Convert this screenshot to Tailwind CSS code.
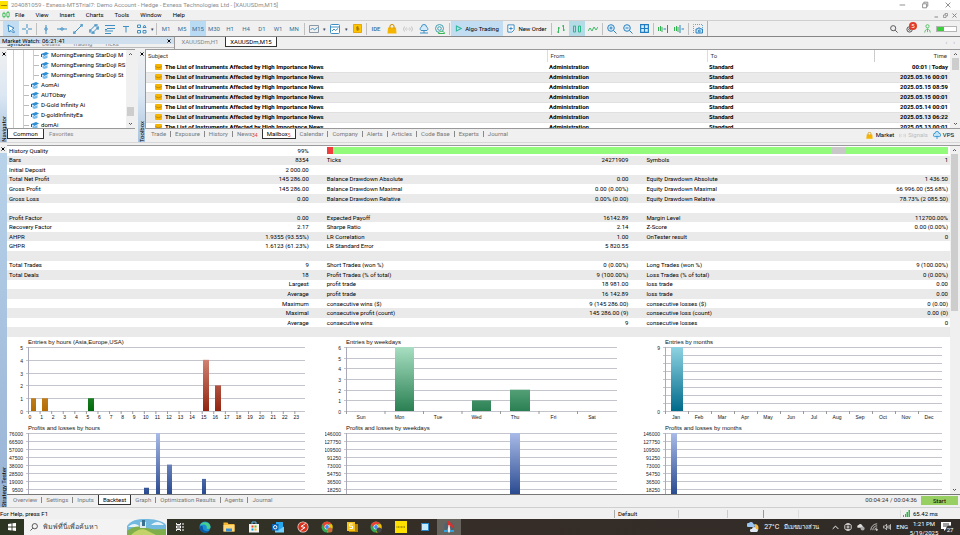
<!DOCTYPE html>
<html lang="en">
<head>
    <meta charset="UTF-8">
    <meta name="viewport" content="width=device-width, initial-scale=1.0">
    <title>204081059 - Exness-MT5Trial7: Demo Account</title>
    <script src="https://cdn.jsdelivr.net/npm/@tailwindcss/browser@4"></script>
</head>
<body class="h-screen flex flex-col overflow-hidden bg-[#f0f0f0] font-['Roboto','Noto_Sans',sans-serif] text-[6px] leading-[8px] text-black">

    <!-- title bar -->
    <header class="flex h-[10px] shrink-0 items-center bg-white text-[#8c8c8c]">
        <span class="h-[8px] w-[8px] bg-[#ffe100] text-center text-[2px] text-black">exness</span>
        <h1 class="ml-[3px]">204081059 - Exness-MT5Trial7: Demo Account - Hedge - Exness Technologies Ltd - [XAUUSDm,M15]</h1>
        <div class="ml-auto flex gap-[15px] pr-[8px]">
            <button aria-label="Minimize"><svg class="size-[8px]" viewBox="0 0 10 10" fill="none" stroke="#777"><path d="M2 5h7"/></svg></button>
            <button aria-label="Restore"><svg class="size-[8px]" viewBox="0 0 10 10" fill="none" stroke="#777"><path d="M2 3.500h5v5H2zM3.500 3V1.500h5v5H7.500"/></svg></button>
            <button aria-label="Close"><svg class="size-[8px]" viewBox="0 0 10 10" fill="none" stroke="#777"><path d="M2 2l6 6M8 2l-6 6"/></svg></button>
        </div>
    </header>

    <!-- menu -->
    <nav class="flex h-[10px] shrink-0 items-center gap-[11px] pl-[2px] text-[6px] text-black">
        <svg class="-mr-[6px] size-[8px]" viewBox="0 0 10 10" fill="none" stroke="#2eb84a"><path d="M1 3h3v4H1zM6 2h3v5H6zM2.500 1v2M2.500 7v2M7.500 0v2M7.500 7v2"/></svg>
        <button>File</button>
        <button>View</button>
        <button>Insert</button>
        <button>Charts</button>
        <button>Tools</button>
        <button>Window</button>
        <button>Help</button>
        <div class="ml-auto flex gap-[4px] pr-[3px]">
            <button aria-label="Minimize chart"><svg class="size-[5px]" viewBox="0 0 10 10" fill="none" stroke="#888" stroke-width="2"><path d="M1 8h7"/></svg></button>
            <button aria-label="Restore chart"><svg class="size-[5px]" viewBox="0 0 10 10" fill="none" stroke="#888" stroke-width="1.500"><path d="M1 4h5v5H1zM4 4V1h5v5H6"/></svg></button>
            <button aria-label="Close chart"><svg class="size-[5px]" viewBox="0 0 10 10" fill="none" stroke="#888" stroke-width="2"><path d="M1 1l8 8M9 1L1 9"/></svg></button>
        </div>
    </nav>

    <!-- toolbar -->
    <div class="flex h-[17px] shrink-0 items-center border-t border-b border-t-[#cfcfcf] border-b-[#868686] pl-[3px] text-[#3b6f96]">
        <button aria-label="Cursor" class="flex h-[15px] w-4 items-center justify-center bg-[#c2dcf2]"><svg class="size-[10px]" viewBox="0 0 10 10" fill="#fff" stroke="#2c82c0"><path d="M2 1l6 3-2 1.500L8.500 8 7.500 9 5 6.500 3 8z"/></svg></button>
        <button aria-label="Crosshair" class="flex w-4 justify-center"><svg class="size-[10px]" viewBox="0 0 10 10" fill="none" stroke="#3f8fc4"><path d="M5 0v4M5 6v4M0 5h4M6 5h4"/></svg></button>
        <i class="mx-px h-3 w-px bg-[#c0c0c0]"></i>
        <button aria-label="Vertical line" class="flex w-4 justify-center"><svg class="size-[10px]" viewBox="0 0 10 10" fill="none" stroke="#3f8fc4"><path d="M5 1v3M5 6v4M4 4h2v2H4z"/></svg></button>
        <button aria-label="Horizontal line" class="flex w-4 justify-center"><svg class="size-[10px]" viewBox="0 0 10 10" fill="none" stroke="#3f8fc4"><path d="M0 5h4M6 5h4M4 4h2v2H4z"/></svg></button>
        <button aria-label="Trendline" class="flex w-4 justify-center"><svg class="size-[10px]" viewBox="0 0 10 10" fill="none" stroke="#3f8fc4"><path d="M1.500 8.500L8.500 1.500M0 8h2v2H0zM8 0h2v2H8z"/></svg></button>
        <button aria-label="Channel" class="flex w-4 justify-center"><svg class="size-[10px]" viewBox="0 0 10 10" fill="none" stroke="#3f8fc4"><path d="M1 6.500l5.500-5.500M3.500 9l5.500-5.500M0 6h2v2H0zM6 0h2v2H6zM3 8h2v2H3zM8 3h2v2H8z"/></svg></button>
        <button aria-label="Fibonacci" class="flex w-4 justify-center"><svg class="size-[10px]" viewBox="0 0 10 10" fill="none" stroke="#3f8fc4"><path d="M0 1.500h10M2 4.500h8M0 7h8M0 9.500h6M0 5.500h2"/></svg></button>
        <button aria-label="Text" class="flex w-4 justify-center"><svg class="size-[10px]" viewBox="0 0 10 10" fill="none" stroke="#3f8fc4"><path d="M2 2.500h6M5 2.500v6"/></svg></button>
        <button aria-label="Shapes" class="flex w-4 justify-center"><svg class="size-[10px]" viewBox="0 0 10 10" fill="none" stroke="#3f8fc4"><path d="M.5 1h3v2.500h-3zM.5 6.500h3V9h-3zM6 6.500h3V9H6zM6 3.500L7.500 1 9 3.500z"/></svg></button>
        <button aria-label="More shapes" class="w-[5px] text-[5px] text-[#444]">▾</button>
        <i class="mr-px ml-px h-3 w-px bg-[#c0c0c0]"></i>
        <button class="h-[15px] w-4">M1</button>
        <button class="h-[15px] w-4">M5</button>
        <button class="h-[15px] w-4 bg-[#b9daf3]">M15</button>
        <button class="h-[15px] w-4">M30</button>
        <button class="h-[15px] w-4">H1</button>
        <button class="h-[15px] w-4">H4</button>
        <button class="h-[15px] w-4">D1</button>
        <button class="h-[15px] w-4">W1</button>
        <button class="h-[15px] w-4">MN</button>
        <i class="mx-[2px] h-3 w-px bg-[#c0c0c0]"></i>
        <button aria-label="Line type" class="flex w-[14px] justify-center"><svg class="size-[10px]" viewBox="0 0 10 10" fill="none" stroke="#8b9aa6"><path d="M.5 1.500h9v7h-9z"/><path stroke="#3f8fc4" d="M1.500 6l2-2 2 2 3-2.500"/></svg></button>
        <button aria-label="Line types" class="w-[6px] text-[5px] text-[#444]">▾</button>
        <button aria-label="Templates" class="flex w-4 justify-center"><svg class="size-[10px]" viewBox="0 0 10 10" fill="#fff" stroke="#3f8fc4"><rect x=".5" y=".5" width="9" height="9" rx="1"/><path fill="none" d="M1 3h8M2 7l2-2 1.500 1.500L8 4.500"/></svg></button>
        <button aria-label="More templates" class="w-[6px] text-[5px] text-[#444]">▾</button>
        <button aria-label="Symbols" class="flex w-4 justify-center"><svg class="size-[9px]" viewBox="0 0 10 10" fill="none" stroke="#a87800"><path fill="#fdc400" stroke="#e0a000" d="M.5.5h9v9h-9z"/><path d="M6.500 3.500H4v1.500h2.500v1.500H3.500M5 2.500v5"/></svg></button>
        <i class="mx-px h-3 w-px bg-[#c0c0c0]"></i>
        <button class="w-4 font-medium">IDE</button>
        <button aria-label="Market" class="flex w-4 justify-center"><svg class="size-[10px]" viewBox="0 0 10 10"><path fill="#f5b400" d="M1 3.500h8l.5 6h-9z"/><path fill="none" stroke="#c88d00" d="M3 4.500V2a2 1.500 0 0 1 4 0v2.500"/></svg></button>
        <button aria-label="Signals" class="flex w-4 justify-center"><svg class="size-[10px]" viewBox="0 0 10 10" fill="none" stroke="#c4c4c4"><path d="M1.500 2.500a4 4 0 0 0 0 5M3.500 3.500a2 2 0 0 0 0 3M6.500 3.500a2 2 0 0 1 0 3M8.500 2.500a4 4 0 0 1 0 5M4.500 5h1"/></svg></button>
        <button aria-label="VPS" class="flex w-4 justify-center"><svg class="size-[10px]" viewBox="0 0 10 10" fill="#d6ebfa" stroke="#3f8fc4"><path d="M2 6.500a2 2 0 0 1 .5-3.500 2.500 2.500 0 0 1 5 0 2 2 0 0 1 .5 3.500zM1 9h8M5 7v2"/></svg></button>
        <button aria-label="Community" class="flex w-4 justify-center"><svg class="size-[10px]" viewBox="0 0 10 10" fill="none" stroke="#3f9fb0"><circle cx="4.500" cy="4.500" r="4"/><circle cx="4.500" cy="4.500" r="1.800"/><path fill="#e8f7ea" stroke="#35b455" d="M3.500 9.500c0-3 6-3 6 0z"/></svg></button>
        <i class="mx-px h-3 w-px bg-[#c0c0c0]"></i>
        <button class="flex h-[15px] w-[52px] items-center justify-center gap-[3px] bg-[#c2dcf2] text-black"><svg class="size-[7px]" viewBox="0 0 10 10" fill="none" stroke="#2eb89a" stroke-width="1.500"><path d="M2 1.500L9 5 2 8.500z"/></svg>Algo Trading</button>
        <button class="flex h-[15px] w-[47px] items-center justify-center gap-[3px] whitespace-nowrap text-black"><svg class="size-[9px]" viewBox="0 0 10 10" fill="#fff" stroke="#2c82c0"><path d="M2 1h7v5.500L6.500 9H2zM5.500 3v4M3.500 5h4"/></svg>New Order</button>
        <i class="mx-px h-3 w-px bg-[#c0c0c0]"></i>
        <button aria-label="Bars" class="flex w-4 justify-center"><svg class="size-[10px]" viewBox="0 0 10 10" fill="none" stroke="#3cb963"><path d="M2.500 3v6M1 8h1.500M2.500 4H4M7.500 1v6M6 2h1.500M7.500 6H9"/></svg></button>
        <button aria-label="Candles" class="flex h-[15px] w-4 items-center justify-center bg-[#b5dbe6]"><svg class="size-[10px]" viewBox="0 0 10 10" fill="none" stroke="#2fb58c"><path d="M1.500 2h2v6h-2zM6.500 2h2v6h-2z"/></svg></button>
        <button aria-label="Line" class="flex w-4 justify-center"><svg class="size-[10px]" viewBox="0 0 10 10" fill="none" stroke="#3cb963"><path d="M0 7l2-3 2 3 2-4 2 3 2-3"/></svg></button>
        <i class="mx-px h-3 w-px bg-[#c0c0c0]"></i>
        <button aria-label="Zoom in" class="flex w-4 justify-center"><svg class="size-[10px]" viewBox="0 0 10 10" fill="#d9ecfa" stroke="#2c82c0"><circle cx="4" cy="4" r="3.300"/><path d="M6.500 6.500l3 3M2.500 4h3M4 2.500v3"/></svg></button>
        <button aria-label="Zoom out" class="flex w-4 justify-center"><svg class="size-[10px]" viewBox="0 0 10 10" fill="#d9ecfa" stroke="#2c82c0"><circle cx="4" cy="4" r="3.300"/><path d="M6.500 6.500l3 3M2.500 4h3"/></svg></button>
        <button aria-label="Tile windows" class="flex w-4 justify-center"><svg class="size-[9px]" viewBox="0 0 10 10" fill="#d9ecfa" stroke="#1f7cc0" stroke-width="1.300"><path d="M.7.7h8.600v8.600H.7zM5 1v8M1 5h8"/></svg></button>
        <i class="mx-px h-3 w-px bg-[#c0c0c0]"></i>
        <button aria-label="Auto scroll" class="flex w-4 justify-center"><svg class="size-[10px]" viewBox="0 0 10 10" fill="none" stroke="#35b455"><path d="M.5 3v4M2.500 2v5M4 3v5"/><path stroke="#2c82c0" d="M5.500 5H8M9.500 1v8"/></svg></button>
        <button aria-label="Chart shift" class="flex w-4 justify-center"><svg class="size-[10px]" viewBox="0 0 10 10" fill="none" stroke="#35b455"><path d="M.5 3v4M2.500 2v5M4 3v5"/><path stroke="#2c82c0" d="M7.500 5H10M6 1v8"/></svg></button>
        <i class="mx-px h-3 w-px bg-[#c0c0c0]"></i>
        <button aria-label="Screenshot" class="flex w-4 justify-center"><svg class="size-[10px]" viewBox="0 0 10 10" fill="none" stroke="#6aa5cc"><path stroke-dasharray="1 1" d="M.5 9V.5h9V4"/><path fill="#cfe6f7" stroke="#2c82c0" d="M3 5h1.500l.5-1h2l.5 1H9.500v4H3z"/><circle cx="6.300" cy="7" r="1" stroke="#2c82c0"/></svg></button>
        <i class="ml-px h-[15px] w-px bg-[#b0b0b0]"></i>
        <div class="ml-auto flex items-center gap-[8px] pr-[3px]">
            <button aria-label="Search"><svg class="size-[8px]" viewBox="0 0 10 10" fill="none" stroke="#555" stroke-width="1.200"><circle cx="4" cy="4" r="3.200"/><path d="M6.500 6.500l3 3"/></svg></button>
            <button aria-label="Notifications" class="relative"><svg class="size-[9px]" viewBox="0 0 10 10" fill="none" stroke="#444"><circle cx="4" cy="6" r="3"/><circle cx="4" cy="6" r="1"/></svg><span class="absolute -top-[2px] left-[3px] size-[8px] rounded-full bg-[#e03a2c] text-center text-[6px] text-white">5</span></button>
            <div class="flex items-center gap-[4px]">
                <button aria-label="Account"><svg class="size-[9px]" viewBox="0 0 10 10" fill="none" stroke="#4fbf5f"><circle cx="5" cy="2.500" r="1.800"/><path d="M2 9.500c0-5 6-5 6 0M5 5v4"/></svg></button>
                <div class="h-[6px] w-[21px] border border-[#b5b5b5] bg-white"><div class="h-full w-[7px] bg-[#3ccf3c]"></div></div>
            </div>
        </div>
    </div>

    <!-- market watch caption and chart tabs -->
    <div class="flex h-[12px] shrink-0">
        <div class="w-[174px] overflow-hidden">
            <div class="flex h-[7px] items-center bg-[#cfdfee] pl-[2px] text-black">Market Watch: 06:21:41<button aria-label="Close Market Watch" class="ml-auto pr-[3px]"><svg class="size-[4px]" viewBox="0 0 4 4" stroke="#000"><path d="M.5.5l3 3M3.500.5l-3 3"/></svg></button></div>
            <div class="flex h-[4px] items-end gap-[12px] overflow-hidden border-b border-[#bbb] pl-[7px] text-[#888]">
                <button class="leading-[6px] text-black">Symbols</button>
                <button class="leading-[6px]">Details</button>
                <button class="leading-[6px]">Trading</button>
                <button class="leading-[6px]">Ticks</button>
            </div>
        </div>
        <div class="flex flex-1 items-start border-l border-[#999]">
            <button class="h-[10px] w-[50px] text-[#888]">XAUUSDm,H1</button>
            <button class="h-[10px] w-[52px] border border-t-0 border-[#333] bg-white text-black">XAUUSDm,M15</button>
            <div class="ml-auto flex gap-[6px] pt-px pr-[5px] text-[#aaa]"><button aria-label="Previous tab">‹</button><button aria-label="Next tab">›</button></div>
        </div>
    </div>

    <div class="flex h-[94px] shrink-0 border-b border-[#d8d8d8]">
        <!-- navigator -->
        <div class="flex w-[7px] flex-col items-center justify-between bg-linear-to-b from-[#f0f0f0] via-[#dbe7f3] to-[#a9c4e0] pt-[3px]">
            <button aria-label="Close Navigator"><svg class="size-[4px]" viewBox="0 0 4 4" stroke="#000"><path d="M.5.5l3 3M3.500.5l-3 3"/></svg></button>
            <span class="rotate-180 text-[6px] leading-[7px] [writing-mode:vertical-rl]">Navigator</span>
        </div>
        <div class="flex w-[128px] flex-col">
            <div class="flex h-[80px] overflow-hidden border-t border-b border-t-[#999] border-b-[#999] bg-white">
                <ul id="tree" class="flex-1 overflow-hidden"></ul>
                <div class="flex w-[9px] flex-col items-center bg-[#f0f0f0]">
                    <svg class="h-[8px] w-[5px]" viewBox="0 0 5 8" fill="none" stroke="#555"><path d="M1 5l1.500-1.500L4 5"/></svg>
                    <div class="mt-auto h-[9px] w-[7px] bg-[#cdcdcd]"></div>
                    <svg class="mt-[4px] h-[8px] w-[5px]" viewBox="0 0 5 8" fill="none" stroke="#555"><path d="M1 3l1.500 1.500L4 3"/></svg>
                </div>
            </div>
            <div class="flex items-start text-[#888]">
                <button class="h-[10px] w-[37px] border border-t-0 border-[#333] bg-white text-black">Common</button>
                <button class="h-[10px] pl-[5px]">Favorites</button>
            </div>
        </div>
        <!-- toolbox -->
        <div class="ml-[3px] flex w-[7px] flex-col items-center justify-between bg-linear-to-b from-[#f0f0f0] via-[#dbe7f3] to-[#a9c4e0] pt-[3px]">
            <button aria-label="Close Toolbox"><svg class="size-[4px]" viewBox="0 0 4 4" stroke="#000"><path d="M.5.5l3 3M3.500.5l-3 3"/></svg></button>
            <span class="rotate-180 text-[6px] leading-[7px] [writing-mode:vertical-rl]">Toolbox</span>
        </div>
        <div class="flex min-w-0 flex-1 flex-col">
            <div class="flex h-[80px] overflow-hidden border-t border-b border-l border-[#999] bg-white">
                <div class="flex-1 overflow-hidden">
                    <table class="w-full table-fixed border-collapse">
                        <thead>
                            <tr class="h-[12px] text-left text-[#333]">
                                <th class="pl-[2px] font-normal">Subject</th>
                                <th class="w-[160px] border-l border-[#ddd] pl-[3px] font-normal">From</th>
                                <th class="w-[167px] border-l border-[#ddd] pl-[3px] font-normal">To</th>
                                <th class="w-[76px] border-l border-[#ccc] pr-[3px] text-right font-normal">Time</th>
                            </tr>
                        </thead>
                        <tbody id="mail"></tbody>
                    </table>
                </div>
                <div class="flex w-[10px] flex-col items-center bg-[#f0f0f0]">
                    <svg class="h-[8px] w-[5px]" viewBox="0 0 5 8" fill="none" stroke="#555"><path d="M1 5l1.500-1.500L4 5"/></svg>
                    <div class="h-[12px] w-[7px] bg-[#cdcdcd]"></div>
                    <svg class="mt-auto h-[8px] w-[5px]" viewBox="0 0 5 8" fill="none" stroke="#555"><path d="M1 3l1.500 1.500L4 3"/></svg>
                </div>
            </div>
            <div class="flex items-start text-[#777]">
                <div id="toolTabs" class="flex items-center pl-[2px]"></div>
                <div class="ml-auto flex items-center gap-[5px] pt-[2px] pr-[6px]">
                    <a href="#" class="flex items-center gap-[3px] text-black"><svg class="size-[7px]" viewBox="0 0 10 10"><path fill="#f5b400" d="M1 3.500h8l.5 6h-9z"/><path fill="none" stroke="#c88d00" d="M3 4.500V2a2 1.500 0 0 1 4 0v2.500"/></svg>Market</a>
                    <a href="#" class="flex items-center gap-[2px] text-[#bbb]"><svg class="size-[7px]" viewBox="0 0 10 10" fill="none" stroke="#c4c4c4"><path d="M1.500 2.500a4 4 0 0 0 0 5M3.500 3.500a2 2 0 0 0 0 3M6.500 3.500a2 2 0 0 1 0 3M8.500 2.500a4 4 0 0 1 0 5"/></svg>Signals</a>
                    <a href="#" class="flex items-center gap-[2px] text-black"><svg class="size-[8px]" viewBox="0 0 10 10" fill="#bfe3fa" stroke="#1f8ad0"><path d="M2 7a2 2 0 0 1 .5-4 2.500 2.500 0 0 1 5 0A2 2 0 0 1 8 7zM5 6v4"/></svg>VPS</a>
                </div>
            </div>
        </div>
    </div>

    <!-- strategy tester -->
    <main class="mt-[2px] flex min-h-0 flex-1">
        <div class="flex w-[7px] flex-col items-center justify-between bg-linear-to-b from-[#b9d3ea] to-[#98b3d5]">
            <button aria-label="Close Strategy Tester" class="w-full bg-[#f0f0f0] px-px py-[2px]"><svg class="size-[4px]" viewBox="0 0 4 4" stroke="#000"><path d="M.5.5l3 3M3.500.5l-3 3"/></svg></button>
            <span class="rotate-180 text-[6px] leading-[7px] [writing-mode:vertical-rl]">Strategy Tester</span>
        </div>
        <div class="flex min-w-0 flex-1 flex-col">
            <div class="flex min-h-0 flex-1 overflow-hidden border-t border-b border-t-[#999] border-b-[#777] bg-white">
                <div class="flex-1 overflow-hidden">
                    <table class="h-[191px] w-full table-fixed border-collapse">
                        <tbody id="stats"></tbody>
                    </table>
                    <div id="charts" class="grid grid-cols-[318fr_318fr_307fr]"></div>
                </div>
                <div class="flex w-[8px] flex-col items-center bg-[#f0f0f0]">
                    <svg class="h-[8px] w-[5px]" viewBox="0 0 5 8" fill="none" stroke="#555"><path d="M1 5l1.500-1.500L4 5"/></svg>
                    <div class="h-[157px] w-[7px] bg-[#cdcdcd]"></div>
                    <svg class="mt-auto h-[8px] w-[5px]" viewBox="0 0 5 8" fill="none" stroke="#555"><path d="M1 3l1.500 1.500L4 3"/></svg>
                </div>
                <div class="w-[2px] bg-[#f0f0f0]"></div>
            </div>
            <div class="flex h-[12px] items-start text-[#777]">
                <div id="testerTabs" class="flex items-center pl-[2px]"></div>
                <span class="ml-auto pt-px text-[#333]">00:04:24 / 00:04:36</span>
                <button class="mt-px mr-[2px] ml-[4px] h-[9px] w-[37px] bg-[#97cf62] text-black">Start</button>
            </div>
        </div>
    </main>

    <!-- status bar -->
    <footer class="flex h-[12px] shrink-0 items-center border-t border-[#cfcfcf] text-black">
        <span class="flex-1">For Help, press F1</span>
        <span class="w-[64px] border-l border-[#aaa] pl-[3px]">Default</span>
        <span class="h-[8px] w-[49px] border-l border-[#ccc]"></span>
        <span class="h-[8px] w-[36px] border-l border-[#ccc]"></span>
        <span class="h-[8px] w-[35px] border-l border-[#999]"></span>
        <span class="h-[8px] w-[102px] border-l border-[#ddd]"></span>
        <span class="flex w-[60px] items-center gap-[3px] border-l border-[#ddd] pl-[2px]"><svg class="size-[7px]" viewBox="0 0 7 7" fill="#2fb84a"><path d="M0 5h1v2H0zM2 4h1v3H2zM3.500 2H5v5H3.500zM5.500 0H7v7H5.500z"/></svg>65.42 ms</span>
    </footer>

    <!-- taskbar -->
    <div class="flex h-[16px] shrink-0 items-center overflow-hidden bg-linear-to-r from-[#2c3522] via-[#362d28] to-[#302b27] text-white">
        <button aria-label="Start menu" class="flex w-[24px] justify-center"><svg class="size-[8px]" viewBox="0 0 9 9" fill="#fff"><path d="M0 1l4-.5V4H0zM5 .4L9 0v4H5zM0 5h4v3.500L0 8zM5 5h4v4l-4-.5z"/></svg></button>
        <label class="flex h-full w-[143px] items-center bg-[#f3f3f3] pl-[6px]">
            <svg class="size-[8px]" viewBox="0 0 10 10" fill="none" stroke="#333"><circle cx="6" cy="4" r="3.300"/><path d="M3.500 6.500L.5 9.500"/></svg>
            <input type="text" aria-label="Search" placeholder="พิมพ์ที่นี่เพื่อค้นหา" class="ml-[5px] w-[84px] min-w-0 bg-transparent text-[7px] leading-[16px] placeholder:text-[#444] focus:outline-none">
            <svg class="h-[16px] w-[39px]" viewBox="0 0 39 16"><path fill="#72b9df" d="M0 7c4-6 10-7 18-7s17 1 21 6v10H0z"/><path fill="#e8f3f8" d="M1 8c4-4 9-4 12 0zM24 6c4-4 9-4 13 0z"/><path fill="#7fae4a" d="M0 16v-4c7-6 14-5 20-3s13 1 19 1v6z"/><path fill="#c3d36a" d="M4 16c6-6 12-7 17-4l8 4z"/><path fill="#dfe9ee" d="M13 3h6v6h-6z"/><path fill="#3b6f8f" d="M15 1h3v6h-3z"/></svg>
        </label>
        <div id="apps" class="ml-px flex h-full"></div>
        <div class="ml-auto flex items-center gap-[5px] pr-[6px]">
            <svg class="size-[12px]" viewBox="0 0 12 12"><circle cx="7.500" cy="7" r="4" fill="#f6b73c"/><circle cx="5" cy="5" r="3" fill="#33302a"/><path fill="#9cc4f0" d="M1 6a2 2 0 0 1 1-4 2.500 2.500 0 0 1 4.500 1A1.500 1.500 0 0 1 6.500 6z"/><path fill="#dfe9f5" d="M4 11a1.500 1.500 0 0 1 1-3 2 2 0 0 1 4 0 1.500 1.500 0 0 1 .5 3z"/></svg>
            <span class="text-[7px]">27°C</span>
            <span class="mr-[8px]">มีเมฆบางส่วน</span>
            <svg class="size-[7px]" viewBox="0 0 10 10" fill="none" stroke="#fff" stroke-width="1.400"><path d="M1 7l4-4 4 4"/></svg>
            <svg class="size-[8px]" viewBox="0 0 10 10" fill="none" stroke="#fff"><rect x="1" y="2" width="8" height="6" rx="1"/><circle cx="5" cy="5" r="1.300"/><path d="M3 .5h4M3 9.500h4"/></svg>
            <svg class="size-[8px]" viewBox="0 0 10 10" fill="#ddd"><path d="M1 6a2 2 0 0 1 1-3.500A2.500 2.500 0 0 1 6.500 3 1.800 1.800 0 0 1 7 6z"/><circle cx="7" cy="7" r="2.500" fill="#aaa"/></svg>
            <svg class="size-[8px]" viewBox="0 0 10 10" fill="none" stroke="#ddd"><path d="M1 9a8 8 0 0 1 8-8M3.500 9A5.500 5.500 0 0 1 9 3.500M6 9a3 3 0 0 1 3-3"/><circle cx="8.500" cy="8.500" r=".8" fill="#fff"/></svg>
            <svg class="size-[8px]" viewBox="0 0 10 10" fill="none" stroke="#ddd"><path d="M0 4h2l2.500-2.500v7L2 6H0zM6 3.500v3M7.700 2.500v5M9.400 1.500v7"/></svg>
            <span>ENG</span>
            <div class="-mx-[4px] w-[30px] self-start pt-px text-center leading-[9px]"><div>1:21 PM</div><div>5/19/2025</div></div>
            <svg class="h-[12px] w-[14px]" viewBox="0 0 14 12"><path fill="#fff" d="M1 1h10v7H6l-2 2V8H1z"/><path stroke="#444" d="M3 3h6M3 5h6"/><circle cx="10" cy="8.500" r="4" fill="#333"/><text x="10" y="11" text-anchor="middle" font-size="6" fill="#fff">27</text></svg>
        </div>
    </div>

    <script>
        const tree = [
            ["MorningEvening StarDoji M", 1],
            ["MorningEvening StarDoji RS", 1],
            ["MorningEvening StarDoji St", 1],
            ["AomAi", 0],
            ["AUTObay", 0],
            ["D-Gold Infinity Ai", 0],
            ["D-goldInfinityEa", 0],
            ["domAi", 0]
        ];
        const treeIcon = `<svg class="mr-[2px] h-[7px] w-[8px] shrink-0" viewBox="0 0 8 7"><path fill="#2f8fd6" d="M0 2l5-2 3 1.500L3.500 4z"/><path fill="#7cbcec" d="M1.500 3.500l2 1 3-1.500v3L3 7l-1.500-1z"/><path stroke="#1c5f96" fill="none" d="M.5 2v3"/></svg>`;
        document.getElementById("tree").innerHTML = tree.map(([name, deep]) => `
            <li class="flex h-[10px] items-center overflow-hidden whitespace-nowrap">
                <span class="h-full w-[7px] shrink-0 border-r border-[#ccc]"></span>
                <span class="h-full w-[10px] shrink-0 border-r border-[#ccc]"></span>
                ${deep ? '<span class="h-full w-[10px] shrink-0 border-r border-[#ccc]"></span>' : ''}
                <span class="mr-[2px] h-px w-[5px] shrink-0 bg-[#bbb]"></span>${treeIcon}${name}
            </li>`).join("");

        const times = ["00:01 | Today", "2025.05.16 00:01", "2025.05.15 08:59", "2025.05.15 00:01", "2025.05.14 00:01", "2025.05.13 06:22", "2025.05.13 00:01"];
        document.getElementById("mail").innerHTML = times.map(time => `
            <tr class="h-[10px] border-b border-[#e0e0e0] font-bold whitespace-nowrap text-black even:bg-[#eaeaea]">
                <td class="pl-[9px]"><span class="flex items-center gap-[3px]"><svg class="h-[6px] w-[7px]" viewBox="0 0 7 6"><rect width="7" height="6" rx="1" fill="#f5b400"/><path d="M.5 2.500c2 1.500 4 1.500 6 0" stroke="#c08a00" fill="none"/></svg>The List of Instruments Affected by High Importance News</span></td>
                <td class="pl-[2px]">Administration</td>
                <td class="pl-[2px]">Standard</td>
                <td class="pr-[2px] text-right">${time}</td>
            </tr>`).join("");

        function renderTabs(id, tabs, active) {
            document.getElementById(id).innerHTML = tabs.map(([name, badge], i) => name === active
                ? `<button class="h-[10px] border border-t-0 border-[#333] bg-white px-[4px] text-black">${name}${badge ? `<sub class="text-[5px] text-[#e03a2c]">${badge}</sub>` : ''}</button>`
                : `<button class="h-[10px] px-[4px]">${name}${badge ? `<sub class="text-[5px] text-[#e03a2c]">${badge}</sub>` : ''}</button>${tabs[i + 1] && tabs[i + 1][0] !== active ? '<i class="h-[6px] w-px bg-[#888]"></i>' : ''}`
            ).join("");
        }
        renderTabs("toolTabs", [["Trade"], ["Exposure"], ["History"], ["News", "34"], ["Mailbox", "5"], ["Calendar"], ["Company"], ["Alerts"], ["Articles"], ["Code Base"], ["Experts"], ["Journal"]], "Mailbox");
        renderTabs("testerTabs", [["Overview"], ["Settings"], ["Inputs"], ["Backtest"], ["Graph"], ["Optimization Results"], ["Agents"], ["Journal"]], "Backtest");

        const stats = [
            ["Bars", "8354", "Ticks", "24271909", "Symbols", "1"],
            ["Initial Deposit", "2 000.00", "", "", "", ""],
            ["Total Net Profit", "145 286.00", "Balance Drawdown Absolute", "0.00", "Equity Drawdown Absolute", "1 436.50"],
            ["Gross Profit", "145 286.00", "Balance Drawdown Maximal", "0.00 (0.00%)", "Equity Drawdown Maximal", "66 996.00 (55.68%)"],
            ["Gross Loss", "0.00", "Balance Drawdown Relative", "0.00% (0.00)", "Equity Drawdown Relative", "78.73% (2 085.50)"],
            ["", "", "", "", "", ""],
            ["Profit Factor", "0.00", "Expected Payoff", "16142.89", "Margin Level", "112700.00%"],
            ["Recovery Factor", "2.17", "Sharpe Ratio", "2.14", "Z-Score", "0.00 (0.00%)"],
            ["AHPR", "1.9355 (93.55%)", "LR Correlation", "1.00", "OnTester result", "0"],
            ["GHPR", "1.6123 (61.23%)", "LR Standard Error", "5 820.55", "", ""],
            ["", "", "", "", "", ""],
            ["Total Trades", "9", "Short Trades (won %)", "0 (0.00%)", "Long Trades (won %)", "9 (100.00%)"],
            ["Total Deals", "18", "Profit Trades (% of total)", "9 (100.00%)", "Loss Trades (% of total)", "0 (0.00%)"],
            ["", "Largest", "profit trade", "18 981.00", "loss trade", "0.00"],
            ["", "Average", "profit trade", "16 142.89", "loss trade", "0.00"],
            ["", "Maximum", "consecutive wins ($)", "9 (145 286.00)", "consecutive losses ($)", "0 (0.00)"],
            ["", "Maximal", "consecutive profit (count)", "145 286.00 (9)", "consecutive loss (count)", "0.00 (0)"],
            ["", "Average", "consecutive wins", "9", "consecutive losses", "0"],
            ["", "", "", "", "", ""]
        ];
        document.getElementById("stats").innerHTML = `
            <tr class="h-[9px]">
                <td class="w-[16%] pl-[2px]">History Quality</td>
                <td class="w-[16%] text-right">99%</td>
                <td colspan="4" class="pr-[2px] pl-[18px]"><div class="flex h-[7px] bg-[#92fb7c]"><i class="w-[6px] bg-[#f23d3d]"></i><i class="mr-[102px] ml-auto w-[14px] bg-[#c8c8c8]"></i></div></td>
            </tr>` + stats.map(r => `
            <tr class="h-[9px] odd:bg-white even:bg-[#eaeaea]">
                <td class="pl-[2px]">${r[0]}</td>
                <td class="text-right">${r[1]}</td>
                <td class="pl-[18px]">${r[2]}</td>
                <td class="pr-px text-right">${r[3]}</td>
                <td class="pl-[17px]">${r[4]}</td>
                <td class="pr-[2px] text-right">${r[5]}</td>
            </tr>`).join("");

        // bars: [x, width, value, gradient]
        const hours = [...Array(24).keys()];
        const days = ["Sun", "Mon", "Tue", "Wed", "Thu", "Fri", "Sat"];
        const months = ["Jan", "Feb", "Mar", "Apr", "May", "Jun", "Jul", "Aug", "Sep", "Oct", "Nov", "Dec"];
        const monthTicks = [9, "", "", "", "", "", "", "", 0];
        const dayMoney = [146000, 127750, 109500, 91250, 73000, 54750, 36500, 18250, ""];
        const charts = [
            { title: "Entries by hours (Asia,Europe,USA)", w: 318, x0: 21, x1: 298, h: 86, max: 5, ticks: [5, 4, 3, 2, 1, 0], labels: hours, first: 23, step: 11.58,
              bars: [[24, 5, 1, "gold"], [35, 6, 1, "gold"], [81, 6, 1, "dark"], [196, 6, 4, "red"], [208, 6, 2, "red"]] },
            { title: "Entries by weekdays", w: 318, x0: 21, x1: 292, h: 86, max: 6, ticks: [6, 5, 4, 3, 2, 1, 0], labels: days, first: 36, step: 38.5,
              bars: [[70, 19, 6, "green"], [147, 19, 1, "green"], [185, 20, 2, "green"]] },
            { title: "Entries by months", w: 307, x0: 22, x1: 299, h: 86, max: 9, ticks: monthTicks, labels: months, first: 33, step: 23,
              bars: [[28, 12, 9, "teal"]] },
            { title: "Profits and losses by hours", w: 318, x0: 21, x1: 298, h: 72, max: 76000, ticks: [76000, 66500, 57000, 47500, 38000, 28500, 19000, 9500, ""], labels: [],
              bars: [[137, 5, 11000, "blue"], [149, 4, 76000, "blue"], [160, 5, 38500, "blue"], [195, 4, 21500, "blue"]] },
            { title: "Profits and losses by weekdays", w: 318, x0: 21, x1: 292, h: 72, max: 146000, ticks: dayMoney, labels: [],
              bars: [[185, 10, 146000, "blue"]] },
            { title: "Profits and losses by months", w: 307, x0: 22, x1: 299, h: 72, max: 146000, ticks: dayMoney, labels: [],
              bars: [[28, 6, 146000, "blue"]] }
        ];
        const colors = { gold: ["#e9c48a", "#b36b00"], dark: ["#8ac48a", "#006b0a"], red: ["#e0998a", "#922410"], green: ["#a8dfc2", "#2a8052"], teal: ["#8fd3e2", "#006a8a"], blue: ["#a9bbe8", "#24458c"] };

        function drawChart(c, n) {
            const top = 10;
            const full = 64;
            const y = v => top + full - full * v / c.max;
            let s = `<svg class="block w-full overflow-hidden font-['Liberation_Sans',sans-serif]" viewBox="0 0 ${c.w} ${c.h}" role="img" aria-label="${c.title}"><defs>`;
            for (const k in colors) {
                s += `<linearGradient id="${k}${n}" gradientUnits="userSpaceOnUse" x1="0" y1="${top}" x2="0" y2="${top + full}"><stop stop-color="${colors[k][0]}"/><stop offset="1" stop-color="${colors[k][1]}"/></linearGradient>`;
            }
            s += `</defs><text x="${c.x0}" y="7" font-size="6" fill="#111">${c.title}</text>`;
            c.ticks.forEach((t, i) => {
                const ty = Math.round(top + full * i / (c.ticks.length - 1)) + 0.5;
                s += `<path stroke="#c4c4cc" d="M${c.x0 - 2} ${ty}H${c.x1}"/><text x="${c.x0 - 5}" y="${ty + 2}" font-size="5" text-anchor="end" fill="#222">${t}</text>`;
            });
            s += `<path stroke="#aab" d="M${c.x0 + 0.5} ${top}V${top + full}"/>`;
            c.bars.forEach(b => {
                s += `<rect x="${b[0]}" y="${y(b[2])}" width="${b[1]}" height="${top + full - y(b[2])}" fill="url(#${b[3]}${n})"/>`;
            });
            c.labels.forEach((l, i) => {
                s += `<path stroke="#999" d="M${c.x0 + 0.5 + i * c.step} ${top + full}v3"/><text x="${c.first + i * c.step}" y="82" font-size="5" text-anchor="middle" fill="#111">${l}</text>`;
            });
            return s + `</svg>`;
        }
        document.getElementById("charts").innerHTML = charts.map(drawChart).join("");

        const chrome = `<circle cx="6" cy="6" r="5.500" fill="#34a853"/><path fill="#ea4335" d="M1.200 3.200A5.500 5.500 0 0 1 10.800 3.200H6L3.500 7z"/><path fill="#fbbc05" d="M10.900 3.300A5.500 5.500 0 0 1 6 11.500L8.500 6.500 8 3.300z"/><circle cx="6" cy="6" r="2.500" fill="#fff"/><circle cx="6" cy="6" r="1.900" fill="#4285f4"/>`;
        const apps = [
            ["Task View", `<path stroke="#fff" fill="none" d="M2.500 2v1.500h4V2M2.500 10V8.500h4V10M2.500 5h4v2h-4zM9 2v2M9 5v2M9 8v2"/>`],
            ["Edge", `<circle cx="6" cy="6" r="5.500" fill="#1b8fd6"/><path fill="#47d18c" d="M1 4.500a5.500 5.500 0 0 1 10.500 1.500c0 2-2.500 2.500-4 1.500C9 4 4 2.500 1 4.500z"/><path fill="#0c59a4" d="M4 5.500c-1 3 2 5.500 6 4.500A5.500 5.500 0 0 1 .6 6.500C1 5 2.500 4.500 4 5.500z"/>`],
            ["File Explorer", `<path fill="#f5b52e" d="M.5 1.500h4l1 1.500h6v7.500H.5z"/><path fill="#ffd978" d="M.5 4h11v6.500H.5z"/><path fill="#3b8fd8" d="M3 7.500h6v3H3z"/>`],
            ["Store", `<path fill="#f2f2f2" d="M1 3h10v8.500H1z"/><path fill="none" stroke="#58b8e8" d="M4 3V1h4v2"/><path fill="#e8452c" d="M3.500 4.500h2v2h-2z"/><path fill="#7fba00" d="M6.500 4.500h2v2h-2z"/><path fill="#00a4ef" d="M3.500 7.500h2v2h-2z"/><path fill="#ffb900" d="M6.500 7.500h2v2h-2z"/>`],
            ["Outlook", `<path fill="#28a8ea" d="M4 1h7v9H4z"/><path fill="#6fd0ff" d="M3 5.500l4.500 3 4.500-3v6H3z"/><path fill="#0b64b8" d="M0 3h6.500v6.500H0z"/><circle cx="3.200" cy="6.200" r="1.700" fill="none" stroke="#fff"/>`],
            ["Player", `<circle cx="6" cy="6" r="5.500" fill="#e8e0dc"/><circle cx="6" cy="6" r="4.800" fill="#d8321f"/><path fill="none" stroke="#fff" d="M8.500 2.500L4 5.500l4 1L3.500 9.500"/>`],
            ["Chrome", chrome + `<circle cx="9" cy="9" r="2.500" fill="#c96a3a"/>`],
            ["Editor", `<path fill="#b88400" d="M3 3h9v8H3z"/><path fill="#f6c21c" d="M1 1h8v9H1z"/><path fill="none" stroke="#fff" d="M6.500 3H3.500v2.200h3v2.300h-3"/>`],
            ["Chrome 2", chrome + `<circle cx="9" cy="9" r="2.500" fill="#45464a"/>`],
            ["Exness", `<path fill="#ffe100" d="M0 0h12v12H0z"/><path stroke="#665a00" d="M1.500 6h9" stroke-dasharray="1 .5"/>`],
            ["Mail", `<path fill="#2b88c8" d="M2 2h8v8H2z"/><path fill="#c6ebff" d="M3 3h6v6H3z"/>`],
            ["MetaTrader", `<circle cx="6" cy="6" r="5" fill="#4d6470"/><path fill="#d9312b" d="M5 0h2v8H5zM6 1a5 5 0 0 1 4 6L7 5z"/><path fill="#e9e9e9" d="M5.500 4h1l1 6-1.500 2-1.500-2z"/><path fill="#38a0d8" d="M1 9h4v2H1zM7 9h4v2H7z"/>`]
        ];
        document.getElementById("apps").innerHTML = apps.map(([name, art], i) => `
            <button aria-label="${name}" class="flex h-full items-center justify-center ${i === apps.length - 1 ? 'w-[24px] bg-[#66645c]' : i % 2 ? 'w-[25px]' : 'w-[24px]'}"><svg class="size-[12px]" viewBox="0 0 12 12">${art}</svg></button>`).join("");
    </script>
</body>
</html>
